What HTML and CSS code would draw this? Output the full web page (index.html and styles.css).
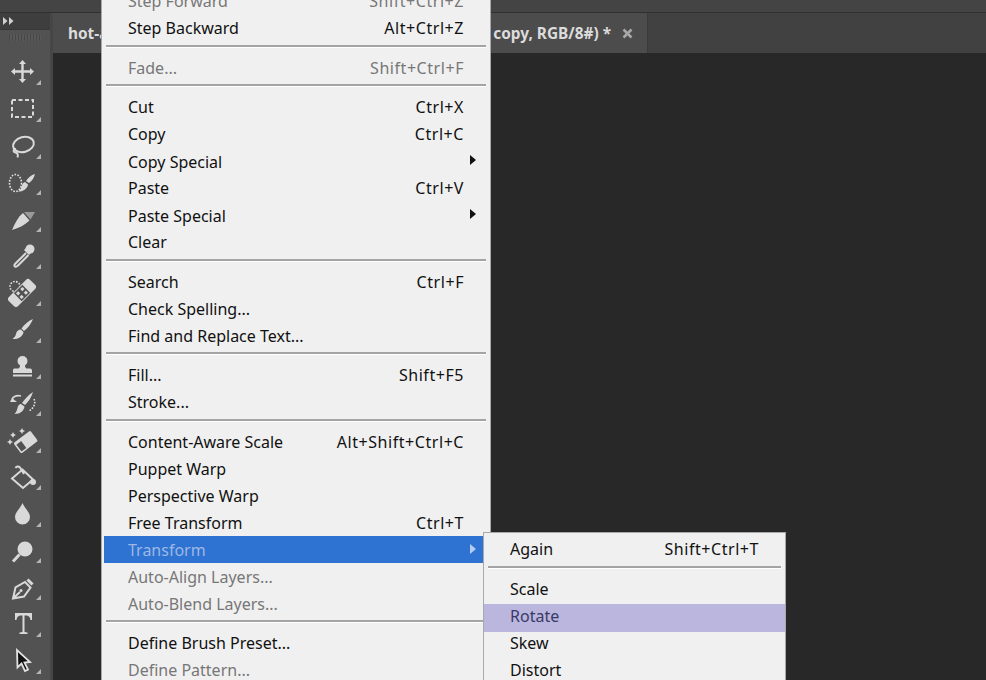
FILE: index.html
```html
<!DOCTYPE html>
<html lang="en">
<head>
<meta charset="utf-8">
<title>Photoshop Edit menu</title>
<link rel="stylesheet" href="styles.css">
</head>
<body>
<div class="app">
  <div class="topbar"></div>
  <div class="workspace">
    <aside class="toolbar">
      <div class="collapse">
        <svg class="chevrons" viewBox="0 0 11 8"><path d="M0 0l4.500 4L0 8zM6 0l4.500 4L6 8z"/></svg>
      </div>
      <div class="grip"></div>
      <div class="tools">
        <div class="tool"><svg viewBox="0 0 24 24"><path d="M11.500 0l3.500 4h-2.300v6.300H19V8l4 3.500L19 15v-2.300h-6.300V19H15l-3.500 4L8 19h2.300v-6.300H4V15L0 11.500 4 8v2.300h6.300V4H8z"/></svg></div>
        <div class="tool"><svg viewBox="0 0 24 24"><rect class="dash" x="1" y="3" width="21" height="17"/></svg></div>
        <div class="tool"><svg viewBox="0 0 24 24"><ellipse class="line" cx="12.500" cy="10.500" rx="10.500" ry="7.500" transform="rotate(-15 12.500 10.500)"/><path class="line" d="M5 15c-3 0-3 3-.5 3.500 2 .5 3 2 2 5"/></svg></div>
        <div class="tool"><svg viewBox="0 0 24 24"><ellipse class="dots" cx="4.500" cy="12" rx="6" ry="8.500"/><path d="M24 3c-1 4-3 7-6 9l-3-2c2-3 5-6 9-7zM14 11l3 2.500c-.5 4-5 7.500-10 7 2-1 3-3 3.500-5 .5-2.500 1.500-3.500 3.500-4.500z"/></svg></div>
        <div class="tool"><svg viewBox="0 0 24 24"><path class="grey" d="M13 4h11l-4.500 7.500z"/><path d="M12 5l6.500 7.500C14 17 8 20 1 22c3-7 6-13 11-17z"/></svg></div>
        <div class="tool"><svg viewBox="0 0 24 24"><circle cx="19" cy="5" r="4.500"/><path d="M13 6l5 5 2-2-5-5z"/><path class="line" d="M15 9L4.500 19.500c-1.500 1.500-1.500 2.500-.5 3s2 0 3-1L17.500 11"/></svg></div>
        <div class="tool"><svg viewBox="0 0 24 24"><circle class="dots" cx="4" cy="5.500" r="5"/><g transform="rotate(-45 11 12)"><rect x="-4" y="5.500" width="30" height="13" rx="3"/><rect class="hole" x="5" y="6.500" width="12" height="11"/><rect x="6.500" y="8" width="3" height="3"/><rect x="12.500" y="8" width="3" height="3"/><rect x="6.500" y="13" width="3" height="3"/><rect x="12.500" y="13" width="3" height="3"/></g></svg></div>
        <div class="tool"><svg viewBox="0 0 24 24"><path d="M22 1c-2 5-5 9-9 12l-2.500-2.500C13 7 17 3 22 1zM10 11.500l2.500 2.500c-.5 4-4.500 7.500-11 7 2-1.500 3-3 3.500-5 .5-3 2.500-4.500 5-4.500z"/></svg></div>
        <div class="tool"><svg viewBox="0 0 24 24"><circle cx="11.500" cy="6" r="5"/><path d="M9 10h5c0 2 .5 3 1.500 3.500h3.500c1.500 0 2 1 2 2V18H2v-2.500c0-1.500.5-2 2-2h3.500C8.500 13 9 12 9 10z"/><rect x="2" y="19.500" width="19" height="2"/></svg></div>
        <div class="tool"><svg viewBox="0 0 24 24"><path d="M22 0c-1.500 5-4 9-8 13l-3-2C14 7 17 3 22 0zM10 12l3.500 2.500c-.5 4-4 7.500-10 7.500 2-2 2.500-4 3-6 .5-2.500 2-4 3.500-4z"/><path class="line thin" d="M10 4C6 3 3 4 1 7"/><path d="M-1 10l2-4 5 4z"/><path class="dots" d="M23 7c2 4 0 9-5 12"/></svg></div>
        <div class="tool"><svg viewBox="0 0 24 24"><g transform="rotate(-37 14 14)"><rect x="4" y="8" width="21" height="13" rx="1.500"/><rect class="hole" x="5.500" y="11" width="6" height="8.500"/></g><path d="M2 4l1 2 2 1-2 1-1 2-1-2-2-1 2-1zM11 0l1 2 2 1-2 1-1 2-1-2-2-1 2-1zM-1 11l1 2 2 1-2 1-1 2-1-2-2-1 2-1z"/></svg></div>
        <div class="tool"><svg viewBox="0 0 24 24"><path class="line" d="M1 13.500l10.500-9 10.500 10L12 23zM4.500 3c1-2 3-2 4.500-.5l4 6.500"/><circle cx="22" cy="17" r="3"/></svg></div>
        <div class="tool"><svg viewBox="0 0 24 24"><path d="M11.500 1C14 7 19 10 19 15a7.500 7.500 0 0 1-15 0c0-5 5-8 7.500-14z"/></svg></div>
        <div class="tool"><svg viewBox="0 0 24 24"><circle cx="14" cy="10" r="7.500"/><path class="thick" d="M8.500 15.500L2 22.500"/></svg></div>
        <div class="tool"><svg viewBox="0 0 24 24"><path class="line" d="M2 22.500l2.500-11L14 6l5.500 5.500L13 20.500zM2.500 22l6.500-6"/><path class="thick" d="M16.500 3.500l5 5"/><circle cx="10" cy="14.500" r="1.500"/></svg></div>
        <div class="tool"><svg viewBox="0 0 24 24"><path d="M4 1h17v7h-1.500c-.5-3-1.500-4.500-5-4.500h-1V20l3 .5V22H8.500v-1.500l3-.5V3.500h-1c-3.500 0-4.500 1.500-5 4.500H4z"/></svg></div>
        <div class="tool"><svg viewBox="0 0 24 24"><path class="arrow" d="M6 1l.5 17.500 4-4 3.500 7.500 3-1.500-3.500-7 5.500-.5z"/></svg></div>
      </div>
    </aside>
    <main class="document">
      <div class="tabs">
        <div class="tab">
          <span class="tab-name">hot-air-balloons.psd @ 100% (Layer 1</span>
          <span class="tab-name">copy, RGB/8#) *</span>
          <svg class="tab-close" viewBox="0 0 11 11"><path d="M1.500 1.500l8 8M9.500 1.500l-8 8"/></svg>
        </div>
      </div>
      <div class="canvas"></div>
    </main>
  </div>

  <nav class="menu edit-menu">
    <div class="row off"><span>Step Forward</span><span class="key">Shift+Ctrl+Z</span></div>
    <div class="row"><span>Step Backward</span><span class="key">Alt+Ctrl+Z</span></div>
    <div class="sep"></div>
    <div class="row off"><span>Fade...</span><span class="key">Shift+Ctrl+F</span></div>
    <div class="sep tight"></div>
    <div class="row"><span>Cut</span><span class="key">Ctrl+X</span></div>
    <div class="row"><span>Copy</span><span class="key">Ctrl+C</span></div>
    <div class="row more nudge"><span>Copy Special</span></div>
    <div class="row"><span>Paste</span><span class="key">Ctrl+V</span></div>
    <div class="row more nudge"><span>Paste Special</span></div>
    <div class="row"><span>Clear</span></div>
    <div class="sep"></div>
    <div class="row"><span>Search</span><span class="key">Ctrl+F</span></div>
    <div class="row"><span>Check Spelling...</span></div>
    <div class="row"><span>Find and Replace Text...</span></div>
    <div class="sep tight"></div>
    <div class="row"><span>Fill...</span><span class="key">Shift+F5</span></div>
    <div class="row"><span>Stroke...</span></div>
    <div class="sep"></div>
    <div class="row"><span>Content-Aware Scale</span><span class="key">Alt+Shift+Ctrl+C</span></div>
    <div class="row"><span>Puppet Warp</span></div>
    <div class="row"><span>Perspective Warp</span></div>
    <div class="row"><span>Free Transform</span><span class="key">Ctrl+T</span></div>
    <div class="row more active"><span>Transform</span></div>
    <div class="row off"><span>Auto-Align Layers...</span></div>
    <div class="row off"><span>Auto-Blend Layers...</span></div>
    <div class="sep tight"></div>
    <div class="row"><span>Define Brush Preset...</span></div>
    <div class="row off"><span>Define Pattern...</span></div>
  </nav>

  <nav class="menu sub-menu">
    <div class="row"><span>Again</span><span class="key">Shift+Ctrl+T</span></div>
    <div class="sep"></div>
    <div class="row"><span>Scale</span></div>
    <div class="row hover"><span>Rotate</span></div>
    <div class="row after-hover"><span>Skew</span></div>
    <div class="row"><span>Distort</span></div>
  </nav>
</div>
</body>
</html>
```

FILE: styles.css
```css
* { box-sizing: border-box; }
html, body { margin: 0; height: 100%; overflow: hidden; background: #282828; }
.app { position: relative; width: 986px; height: 680px; overflow: hidden; display: flex; flex-direction: column; font-family: "Noto Sans", "Open Sans", sans-serif; }
.topbar { height: 13px; flex: none; background: #444; border-bottom: 1px solid #303030; }
.workspace { flex: 1; display: flex; min-height: 0; }

.toolbar { width: 53px; flex: none; background: #525252; border-right: 3px solid #464646; display: flex; flex-direction: column; }
.collapse { height: 17px; background: #3e3e3e; border-bottom: 1px solid #383838; display: flex; align-items: center; padding-left: 3px; }
.chevrons { width: 11px; height: 8px; fill: #d0d0d0; }
.grip { height: 7px; margin: 4px 9px 0; background: repeating-linear-gradient(90deg, #474747 0 1px, #585858 1px 3px); }
.tools { padding-top: 13px; display: flex; flex-direction: column; }
.tool { position: relative; height: 36.8px; flex: none; padding-left: 11px; display: flex; align-items: center; }
.tool::after { content: ""; position: absolute; left: 36px; top: 26px; border-style: solid; border-width: 0 0 5px 5px; border-color: transparent transparent #b4b4b4 transparent; }
.tool svg { width: 24px; height: 24px; fill: #d9d9d9; stroke: none; overflow: visible; }
.line { fill: none; stroke: #d9d9d9; stroke-width: 2; }
.thin { stroke-width: 1.500; }
.thick { fill: none; stroke: #d9d9d9; stroke-width: 3; }
.grey { fill: #9a9a9a; }
.dash { fill: none; stroke: #d9d9d9; stroke-width: 2; stroke-dasharray: 4 2.500; }
.dots { fill: none; stroke: #e2e2e2; stroke-width: 1.600; stroke-dasharray: 1.600 1.400; }
.hole { fill: #525252; }
.arrow { fill: #111; stroke: #e2e2e2; stroke-width: 1.800; }

.document { flex: 1; min-width: 0; display: flex; flex-direction: column; }
.tabs { height: 40px; flex: none; background: #414141; display: flex; }
.tab { width: 595px; background: #4c4c4c; border-right: 1px solid #3a3a3a; display: flex; align-items: center; padding: 0 14px 0 15px; color: #dcdcdc; font-size: 15.400px; font-weight: 700; white-space: nowrap; }
.tab-name:first-child { flex: 1; }
.tab-close { width: 11px; height: 11px; margin-left: 11px; fill: none; stroke: #a8a8a8; stroke-width: 2.500; }
.canvas { flex: 1; background: #282828; }

.menu { position: absolute; background: #f0f0f0; border: 1px solid #a9a9a9; color: #111; font-size: 16px; overflow: hidden; }
.edit-menu { left: 101px; top: -14px; width: 390px; height: 700px; padding: 0 2px; }
.sub-menu { left: 483px; top: 532px; width: 303px; height: 160px; padding-top: 2px; }
.row { height: 27px; display: flex; align-items: center; justify-content: space-between; padding: 0 24px; white-space: nowrap; position: relative; }
.key { letter-spacing: .55px; }
.off { color: #777; }
.more::after { content: ""; position: absolute; right: 12px; top: 8px; border-style: solid; border-width: 5px 0 5px 6px; border-color: transparent transparent transparent #111; }
.nudge { padding-top: 2px; }
.active { background: #2e72d2; color: #9db8e4; }
.active::after { border-left-color: #b5cdf0; }
.hover { background: #bbb6de; color: #3a3a68; height: 28px; margin-top: 2px; padding-bottom: 4px; }
.after-hover { margin-top: -2.500px; }
.sep { height: 13px; padding-top: 4px; margin: 0 2px; }
.sep::before { content: ""; display: block; height: 2px; background: #a4a4a4; border-bottom: 1px solid #fff; }
.tight { height: 12px; padding-top: 3px; }
.sub-menu .row { padding: 0 26px; }
.sub-menu .hover { padding-bottom: 4px; }
.sub-menu .sep { height: 13px; margin: 0 4px; }
```
